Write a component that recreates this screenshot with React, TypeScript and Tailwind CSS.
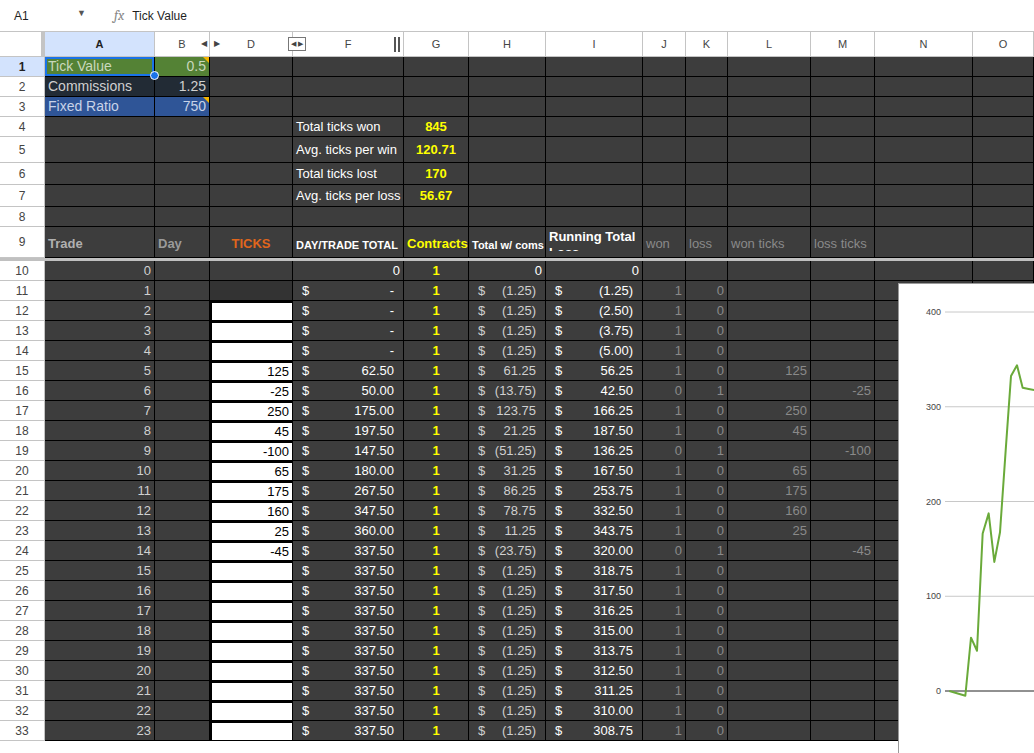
import React from "react";

const W = [110, 55, 83, 111, 65, 77, 97, 43, 42, 83, 64, 98, 61];
const COLS = ["A", "B", "D", "F", "G", "H", "I", "J", "K", "L", "M", "N", "O"];

type C = { t?: React.ReactNode; cls?: string; bg?: string };

const acc = (v: string, cls = "text-white") => (
  <div className={"flex w-full justify-between px-[6px] " + cls}>
    <span>$</span>
    <span>{v}</span>
  </div>
);

const ticks: Record<number, number> = { 15: 125, 16: -25, 17: 250, 18: 45, 19: -100, 20: 65, 21: 175, 22: 160, 23: 25, 24: -45 };
const F = ["62.50", "50.00", "175.00", "197.50", "147.50", "180.00", "267.50", "347.50", "360.00", "337.50"];
const H = ["61.25", "(13.75)", "123.75", "21.25", "(51.25)", "31.25", "86.25", "78.75", "11.25", "(23.75)"];
const I = ["(1.25)", "(2.50)", "(3.75)", "(5.00)", "56.25", "42.50", "166.25", "187.50", "136.25", "167.50", "253.75", "332.50", "343.75", "320.00", "318.75", "317.50", "316.25", "315.00", "313.75", "312.50", "311.25", "310.00", "308.75"];

function dataRow(r: number): C[] {
  const i = r - 10;
  const t = ticks[r];
  const loss = t !== undefined && t < 0;
  const cells: C[] = [];
  cells.push({ t: String(i), cls: "justify-end text-[#d0d0d0]" });
  cells.push({});
  if (r === 10) cells.push({});
  else if (r === 11) cells.push({ bg: "bg-[#333333]" });
  else cells.push({ t: t !== undefined ? String(t) : "", bg: "bg-white", cls: "justify-end text-black border-[2px] border-black" });
  if (r === 10) cells.push({ t: "0", cls: "justify-end text-white" });
  else if (r < 15) cells.push({ t: acc("-  ") });
  else cells.push({ t: acc(F[Math.min(r - 15, 9)]) });
  cells.push({ t: "1", cls: "justify-center text-[#ffff00] font-bold" });
  if (r === 10) cells.push({ t: "0", cls: "justify-end text-white" });
  else if (r >= 15 && r <= 24) cells.push({ t: acc(H[r - 15], "text-[#d0d0d0]") });
  else cells.push({ t: acc("(1.25)", "text-[#d0d0d0]") });
  if (r === 10) cells.push({ t: "0", cls: "justify-end text-white" });
  else cells.push({ t: acc(I[r - 11]) });
  if (r === 10) { cells.push({}); cells.push({}); }
  else {
    cells.push({ t: loss ? "0" : "1", cls: "justify-end text-[#8a8a8a]" });
    cells.push({ t: loss ? "1" : "0", cls: "justify-end text-[#8a8a8a]" });
  }
  cells.push({ t: t !== undefined && t > 0 ? String(t) : "", cls: "justify-end text-[#8a8a8a]" });
  cells.push({ t: loss ? String(t) : "", cls: "justify-end text-[#8a8a8a]" });
  cells.push({});
  cells.push({});
  return cells;
}

const e = (): C => ({});
function topRows(): { h: number; cells: C[] }[] {
  const blank = () => Array.from({ length: 13 }, e);
  const r1 = blank();
  r1[0] = { t: "Tick Value", bg: "bg-[#548235]", cls: "text-[#c9d8bc] ring-2 ring-inset ring-[#1a73e8] text-[14px]" };
  r1[1] = { t: "0.5", bg: "bg-[#548235]", cls: "text-[#c9d8bc] justify-end text-[14px]" };
  const r2 = blank();
  r2[0] = { t: "Commissions", bg: "bg-[#222b35]", cls: "text-[#d0d0d0] text-[14px]" };
  r2[1] = { t: "1.25", bg: "bg-[#222b35]", cls: "text-[#d0d0d0] justify-end text-[14px]" };
  const r3 = blank();
  r3[0] = { t: "Fixed Ratio", bg: "bg-[#2f5597]", cls: "text-[#c8d3e8] text-[14px]" };
  r3[1] = { t: "750", bg: "bg-[#2f5597]", cls: "text-[#c8d3e8] justify-end text-[14px]" };
  const stat = (l: string, v: string) => {
    const r = blank();
    r[3] = { t: l, cls: "text-white" };
    r[4] = { t: v, cls: "justify-center text-[#ffff00] font-bold" };
    return r;
  };
  const r9: C[] = [
    { t: "Trade", cls: "font-bold text-[#b0b0b0] items-end pb-[4px]" },
    { t: "Day", cls: "font-bold text-[#9a9a9a] items-end pb-[4px]" },
    { t: "TICKS", cls: "font-bold text-[#e0661c] justify-center items-end pb-[4px]" },
    { t: "DAY/TRADE TOTAL", cls: "font-bold text-white text-[11px] items-end pb-[4px]" },
    { t: "Contracts", cls: "font-bold text-[#ffff00] items-end pb-[4px] px-[2px]" },
    { t: "Total w/ coms", cls: "font-bold text-white text-[11px] items-end pb-[4px] px-[2px]" },
    { t: <span className="leading-[16px] block h-[22px] overflow-hidden">Running Total<br />Loss</span>, cls: "font-bold text-white items-start pt-[2px] overflow-hidden" },
    { t: "won", cls: "text-[#8a8a8a] items-end pb-[4px]" },
    { t: "loss", cls: "text-[#8a8a8a] items-end pb-[4px]" },
    { t: "won ticks", cls: "text-[#8a8a8a] items-end pb-[4px]" },
    { t: "loss ticks", cls: "text-[#8a8a8a] items-end pb-[4px]" },
    {}, {},
  ];
  return [
    { h: 20, cells: r1 }, { h: 20, cells: r2 }, { h: 20, cells: r3 },
    { h: 20, cells: stat("Total ticks won", "845") },
    { h: 26, cells: stat("Avg. ticks per win", "120.71") },
    { h: 22, cells: stat("Total ticks lost", "170") },
    { h: 22, cells: stat("Avg. ticks per loss", "56.67") },
    { h: 20, cells: blank() },
    { h: 31, cells: r9 },
  ];
}

function Row({ n, h, cells }: { n: number; h: number; cells: C[] }) {
  return (
    <div className="flex" style={{ height: h }}>
      <div className={"w-[45px] shrink-0 flex items-center justify-center text-[12px] border-r border-b border-[#c4c4c4] " + (n === 1 ? "bg-[#d3e3fd] font-bold text-[#1f1f1f]" : "bg-white text-[#444]")}>{n}</div>
      {cells.map((c, i) => (
        <div key={i} style={{ width: W[i] }} className={"shrink-0 flex items-center px-[3px] border-r border-b border-black whitespace-nowrap " + (c.bg ?? "bg-[#3d3d3d]") + " " + (c.cls ?? "")}>
          {c.t}
        </div>
      ))}
    </div>
  );
}

function Chart() {
  const pts: [number, number][] = [[160, 0], [208, -5], [225, 56.25], [243, 42.5], [260, 166.25], [278, 187.5], [295, 136.25], [312, 167.5], [329, 253.75], [345, 332.5], [363, 343.75], [380, 320], [398, 318.75], [417, 317.5]];
  const y = (v: number) => 407 - v * 0.9475;
  const p = pts.map(([x, v]) => `${x / 3 - 3},${y(v)}`).join(" ");
  return (
    <div className="absolute left-[898px] top-[283px] w-[136px] h-[470px] bg-white border-l border-t border-[#9a9a9a]">
      <svg width="136" height="470" className="block">
        {[400, 300, 200, 100].map((v) => (
          <g key={v}>
            <line x1="46" x2="136" y1={y(v)} y2={y(v)} stroke="#c8c8c8" strokeWidth="1" />
            <text x="42" y={y(v) + 3} fontSize="9" textAnchor="end" fill="#444" fontFamily="Liberation Sans, sans-serif">{v}</text>
          </g>
        ))}
        <line x1="46" x2="136" y1={y(0)} y2={y(0)} stroke="#222" strokeWidth="1" />
        <text x="42" y={y(0) + 3} fontSize="9" textAnchor="end" fill="#444" fontFamily="Liberation Sans, sans-serif">0</text>
        <polyline points={p} fill="none" stroke="#6aaa3a" strokeWidth="2" strokeLinejoin="round" />
      </svg>
    </div>
  );
}

export default function App() {
  const top = topRows();
  return (
    <div className="relative w-[1034px] h-[753px] overflow-hidden bg-white text-[13px]" style={{ fontFamily: "'Liberation Sans', Arial, sans-serif" }}>
      <div className="h-[32px] flex items-center text-[12px] text-[#1f1f1f] border-b border-[#c4c4c4]">
        <div className="w-[90px] pl-[14px] flex justify-between pr-[4px]"><span>A1</span><span className="text-[#555] text-[9px]">▼</span></div>
        <span className="ml-[24px] italic text-[#888] font-serif text-[14px]">fx</span>
        <span className="ml-[8px]">Tick Value</span>
      </div>
      <div className="flex h-[25px] text-[11px] text-[#444] bg-white">
        <div className="w-[45px] shrink-0 border-r-[4px] border-b border-[#c4c4c4]" />
        {COLS.map((c, i) => (
          <div key={c} style={{ width: W[i] }} className={"shrink-0 flex items-center justify-center border-r border-b border-[#c4c4c4] relative " + (i === 0 ? "bg-[#d3e3fd] font-bold text-[#1f1f1f]" : "")}>
            {c}
            {i === 1 && <span className="absolute right-[2px] text-[8px]">◀</span>}
            {i === 2 && <span className="absolute left-[4px] text-[8px]">▶</span>}
            {i === 2 && <span className="absolute right-[-14px] z-10 border border-[#777] bg-white px-[2px] text-[7px] leading-[12px]">◀ ▶</span>}
            {i === 4 && <span className="absolute left-[-10px] top-[5px] w-[6px] h-[15px] border-x-2 border-[#555]" />}
          </div>
        ))}
      </div>
      {top.map((r, i) => <Row key={i} n={i + 1} h={r.h} cells={r.cells} />)}
      <div className="h-[3px] bg-[#c0c0c0]" />
      {Array.from({ length: 24 }, (_, i) => i + 10).map((r) => <Row key={r} n={r} h={20} cells={dataRow(r)} />)}
      <div className="absolute left-[150px] top-[71px] w-[9px] h-[9px] rounded-full bg-[#1a73e8] border border-white" />
      <div className="absolute left-[203px] top-[57px] w-0 h-0 border-l-[6px] border-l-transparent border-t-[6px] border-t-[#f4b400]" />
      <div className="absolute left-[203px] top-[97px] w-0 h-0 border-l-[6px] border-l-transparent border-t-[6px] border-t-[#f4b400]" />
      <Chart />
    </div>
  );
}
